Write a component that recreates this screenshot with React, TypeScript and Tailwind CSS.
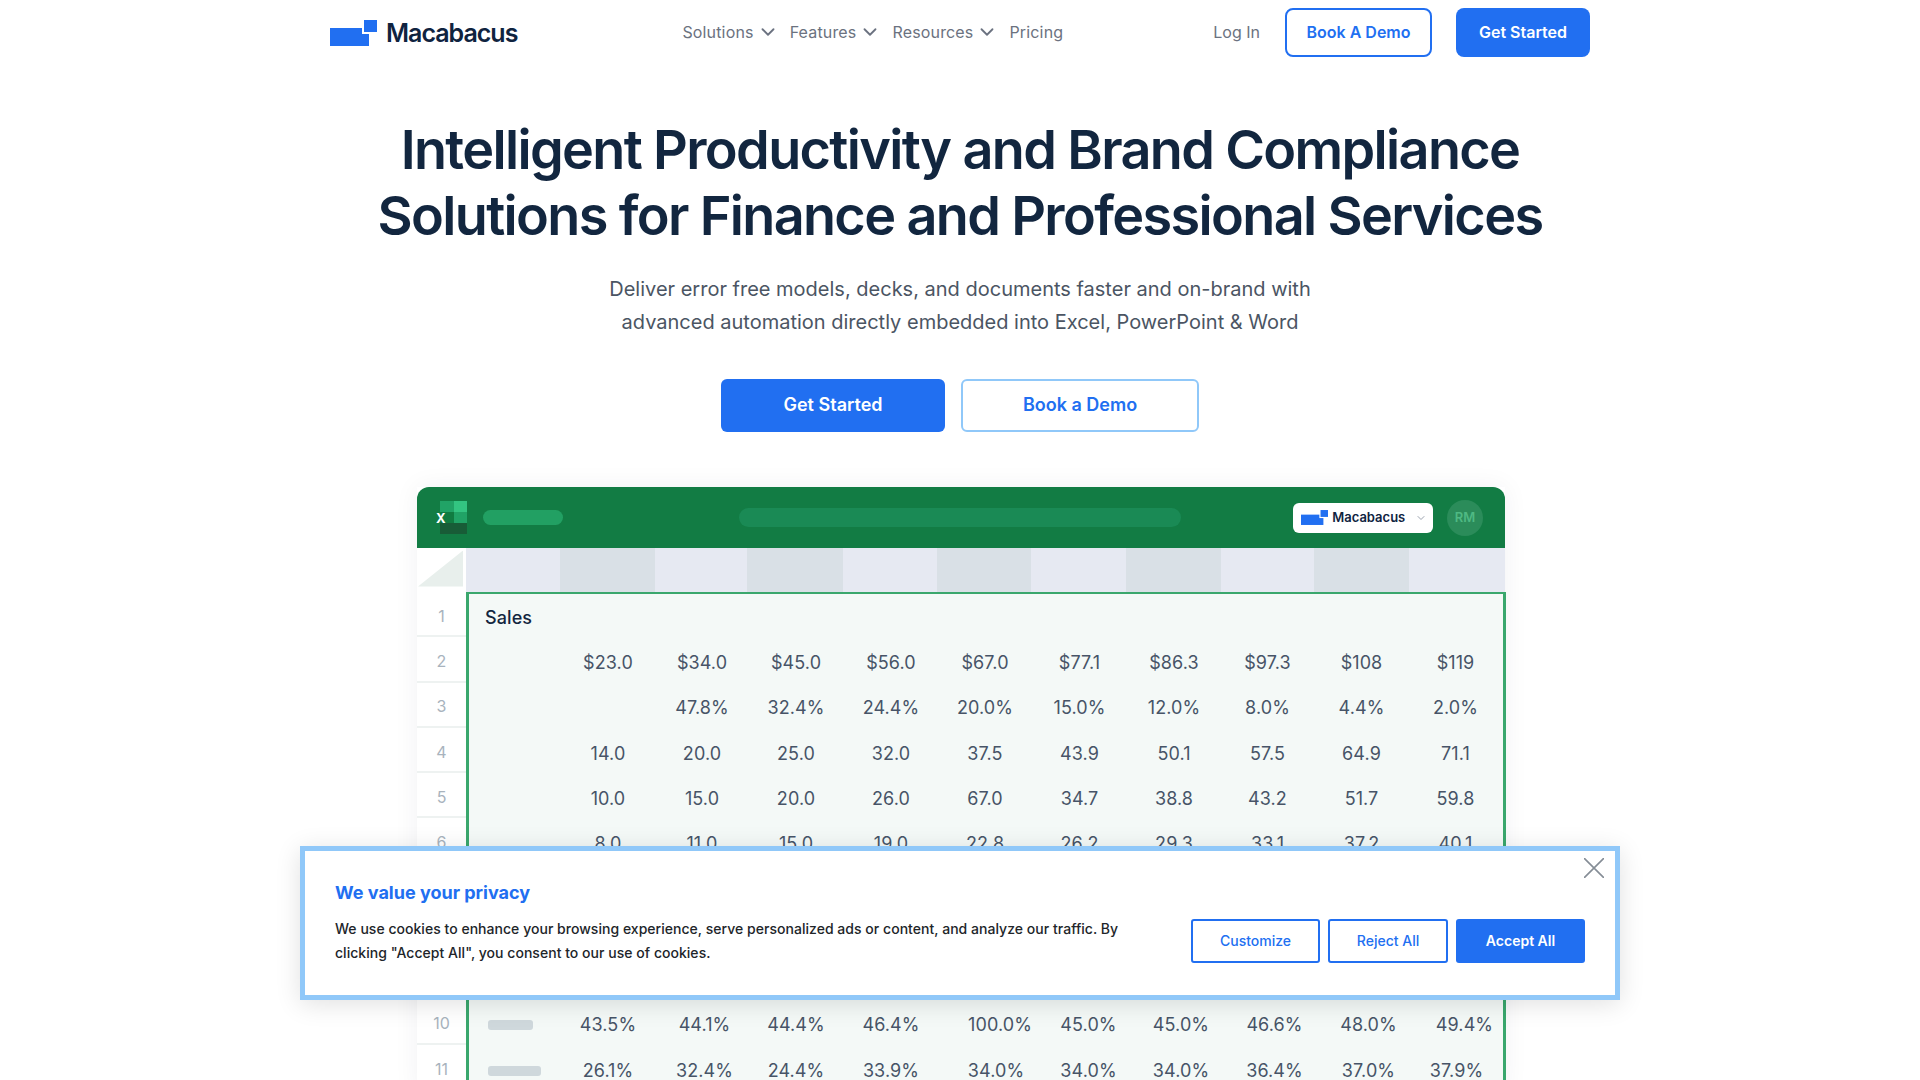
import { ChevronDown } from "lucide-react";

const blank = ["", "", "", "", "", "", "", "", "", ""];

// the last two rows sit a little off the column centres in the picture
const pads10 = ["", "pl-[5px]", "", "", "pl-[30px]", "pl-[18px]", "pl-[14px]", "pl-[14px]", "pl-[14px]", "pl-[18px]"];
const pads11 = ["", "pl-[5px]", "", "", "pl-[22px]", "pl-[18px]", "pl-[14px]", "pl-[14px]", "pl-[14px]", "pl-[2px]"];

const rows: { n: number; cells: string[]; bar?: string; pads?: string[]; hidden?: boolean }[] = [
  { n: 1, cells: blank },
  { n: 2, cells: ["$23.0", "$34.0", "$45.0", "$56.0", "$67.0", "$77.1", "$86.3", "$97.3", "$108", "$119"] },
  { n: 3, cells: ["", "47.8%", "32.4%", "24.4%", "20.0%", "15.0%", "12.0%", "8.0%", "4.4%", "2.0%"] },
  { n: 4, cells: ["14.0", "20.0", "25.0", "32.0", "37.5", "43.9", "50.1", "57.5", "64.9", "71.1"] },
  { n: 5, cells: ["10.0", "15.0", "20.0", "26.0", "67.0", "34.7", "38.8", "43.2", "51.7", "59.8"] },
  { n: 6, cells: ["8.0", "11.0", "15.0", "19.0", "22.8", "26.2", "29.3", "33.1", "37.2", "40.1"] },
  { n: 7, cells: blank, hidden: true },
  { n: 8, cells: blank, hidden: true },
  { n: 9, cells: blank, hidden: true },
  { n: 10, bar: "w-[45px]", pads: pads10, cells: ["43.5%", "44.1%", "44.4%", "46.4%", "100.0%", "45.0%", "45.0%", "46.6%", "48.0%", "49.4%"] },
  { n: 11, bar: "w-[53px]", pads: pads11, cells: ["26.1%", "32.4%", "24.4%", "33.9%", "34.0%", "34.0%", "34.0%", "36.4%", "37.0%", "37.9%"] },
];

const Logo = ({ className }: { className: string }) => (
  <svg viewBox="0 0 47 26" className={className}>
    <rect x="0" y="8" width="39" height="18" fill="#216ff1" />
    <rect x="32" y="0" width="15" height="14" fill="#ffffff" />
    <rect x="34" y="0" width="13" height="12" fill="#216ff1" />
  </svg>
);

const NavLink = ({ label }: { label: string }) => (
  <a className="flex items-center text-base tracking-[0.01em] text-[#6b7280]">
    {label}
    <ChevronDown className="ml-[3px] h-[22px] w-[22px]" strokeWidth={2} />
  </a>
);

const ExcelIcon = () => (
  <div className="relative h-[33px] w-[34px]">
    <svg viewBox="0 0 27 33" className="absolute right-0 top-0 h-[33px] w-[27px]">
      <rect x="0" y="0" width="14" height="11" fill="#21a366" />
      <rect x="14" y="0" width="13" height="11" fill="#33c481" />
      <rect x="0" y="11" width="14" height="11" fill="#107c41" />
      <rect x="14" y="11" width="13" height="11" fill="#21a366" />
      <rect x="0" y="22" width="27" height="11" fill="#185c37" />
    </svg>
    <span className="absolute left-[3px] top-[9px] text-[13px] font-bold leading-[16px] text-white">X</span>
  </div>
);

const App = () => (
  <div className="relative h-screen overflow-hidden bg-white font-['Inter',sans-serif]">
    <header className="mx-auto flex h-[65px] w-[1260px] items-center">
      <a className="flex items-center gap-[9px]">
        <Logo className="h-[26px] w-[47px]" />
        <span className="pt-[3px] text-[25px] font-semibold tracking-[-0.04em] text-[#0f233f]">Macabacus</span>
      </a>
      <nav className="ml-[165px] flex items-center gap-[11px] pb-[2px]">
        <NavLink label="Solutions" />
        <NavLink label="Features" />
        <NavLink label="Resources" />
        <a className="text-base tracking-[0.01em] text-[#6b7280]">Pricing</a>
      </nav>
      <div className="ml-auto flex items-center">
        <a className="mr-[25px] pb-[2px] text-base text-[#6b7280]">Log In</a>
        <a className="mr-6 flex h-[49px] w-[147px] items-center justify-center rounded-lg border-2 border-[#216ff1] pb-px text-base font-semibold text-[#216ff1]">
          Book A Demo
        </a>
        <a className="flex h-[49px] w-[134px] items-center justify-center rounded-lg bg-[#216ff1] pb-px text-base font-semibold text-white">
          Get Started
        </a>
      </div>
    </header>

    <main className="flex flex-col items-center pt-[52px]">
      <h1 className="text-center text-[54px] font-semibold leading-[66px] tracking-[-1.65px] text-[#12263f]">
        Intelligent Productivity and Brand Compliance
        <br />
        Solutions for Finance and Professional Services
      </h1>
      <p className="mt-[24px] text-center text-xl leading-[33px] text-[#4b5563]">
        Deliver error free models, decks, and documents faster and on-brand with
        <br />
        advanced automation directly embedded into Excel, PowerPoint &amp; Word
      </p>
      <div className="mt-[40px] flex gap-4">
        <a className="flex h-[53px] w-[224px] items-center justify-center rounded-md bg-[#216ff1] pb-px text-lg font-semibold text-white">
          Get Started
        </a>
        <a className="flex h-[53px] w-[238px] items-center justify-center rounded-md border-2 border-[#90c8f9] pb-px text-lg font-semibold text-[#216ff1]">
          Book a Demo
        </a>
      </div>

      <section className="ml-[2px] mt-[55px] w-[1088px] shadow-[0_0_24px_rgba(15,35,63,0.06)]">
        <div className="flex h-[61px] items-center rounded-t-xl bg-[#127c44] pl-[16px] pr-[22px]">
          <ExcelIcon />
          <div className="ml-[16px] h-[15px] w-[80px] rounded-full bg-[#22a063]" />
          <div className="ml-[176px] h-[19px] w-[443px] rounded-full bg-[#1a8a55]" />
          <div className="ml-[112px] flex h-[30px] w-[140px] items-center rounded-md bg-white pl-2">
            <Logo className="h-[15px] w-[27px]" />
            <span className="ml-[4px] text-[13px] font-semibold text-[#0f233f]">Macabacus</span>
            <ChevronDown className="ml-[10px] h-3 w-3 text-[#9ca3af]" />
          </div>
          <div className="ml-[14px] flex h-9 w-9 items-center justify-center rounded-full bg-[#2b8c5a] text-[13px] font-semibold text-[#4fb983]">
            RM
          </div>
        </div>

        <div className="flex h-[44px]">
          <div className="flex w-[49px] items-center pb-[3px] pl-[1px]">
            <div className="h-9 w-[45px] bg-[#e8efec] [clip-path:polygon(100%_0,100%_100%,0_100%)]" />
          </div>
          <div className="grid flex-1 grid-cols-[94px_95px_92px_96px_94px_94px_95px_95px_93px_95px_1fr]">
            {[0, 1, 2, 3, 4, 5, 6, 7, 8, 9, 10].map((c) => (
              <div key={c} className={c % 2 === 1 ? "bg-[#d9e0e6]" : "bg-[#e6e9f2]"} />
            ))}
          </div>
        </div>

        <div className="flex">
          <div className="w-[49px]">
            {rows.map((r) => (
              <div
                key={r.n}
                className="flex h-[45.3px] items-center justify-center border-b-2 border-[#eef2f1] pt-[4px] text-base text-[#a8b3bd]"
              >
                {!r.hidden && r.n}
              </div>
            ))}
          </div>
          <div className="-mr-px flex-1 border-x-[3px] border-t-2 border-[#3aa76d] bg-[#f4f9f7] pt-[1px]">
            {rows.map((r) => (
              <div key={r.n} className="grid h-[45.3px] grid-cols-[91px_96px_92px_96px_94px_94px_95px_94px_93px_95px_93px] items-center text-lg tracking-[0.005em] text-[#475467]">
                <div className="pl-[16px]">
                  {r.n === 1 && <span className="font-medium text-[#12263f]">Sales</span>}
                  {r.bar && <div className={`ml-[3px] h-[10px] rounded-[3px] bg-[#cfd8dc] ${r.bar}`} />}
                </div>
                {r.cells.map((v, i) => (
                  <div key={i} className={`whitespace-nowrap text-center ${r.pads ? r.pads[i] : ""}`}>
                    {v}
                  </div>
                ))}
              </div>
            ))}
          </div>
        </div>
      </section>
    </main>

    <aside className="absolute left-[300px] top-[846px] flex h-[154px] w-[1320px] items-end border-[5px] border-[#90c8f9] bg-white pb-[30px] pl-[30px] pr-[30px] shadow-[0_4px_24px_rgba(0,0,0,0.12)]">
      <button className="absolute right-[11px] top-[7px] text-[#858d96]" aria-label="Close">
        <svg viewBox="0 0 20 20" className="h-5 w-5" stroke="currentColor" strokeWidth="1.6" fill="none">
          <path d="M0 0 L20 20 M20 0 L0 20" />
        </svg>
      </button>
      <div className="w-[800px]">
        <h2 className="text-lg font-bold leading-7 text-[#216ff1]">We value your privacy</h2>
        <p className="mt-[10px] text-sm font-medium leading-6 tracking-[0.03px] text-[#212529]">
          We use cookies to enhance your browsing experience, serve personalized ads or content, and analyze our traffic. By
          <br />
          clicking "Accept All", you consent to our use of cookies.
        </p>
      </div>
      <div className="mb-[2px] ml-auto flex gap-2">
        <button className="h-11 w-[129px] rounded-[3px] border-2 border-[#216ff1] text-sm font-medium text-[#216ff1]">Customize</button>
        <button className="h-11 w-[120px] rounded-[3px] border-2 border-[#216ff1] text-sm font-medium text-[#216ff1]">Reject All</button>
        <button className="h-11 w-[129px] rounded-[3px] bg-[#216ff1] text-sm font-semibold text-white">Accept All</button>
      </div>
    </aside>
  </div>
);

export default App;
